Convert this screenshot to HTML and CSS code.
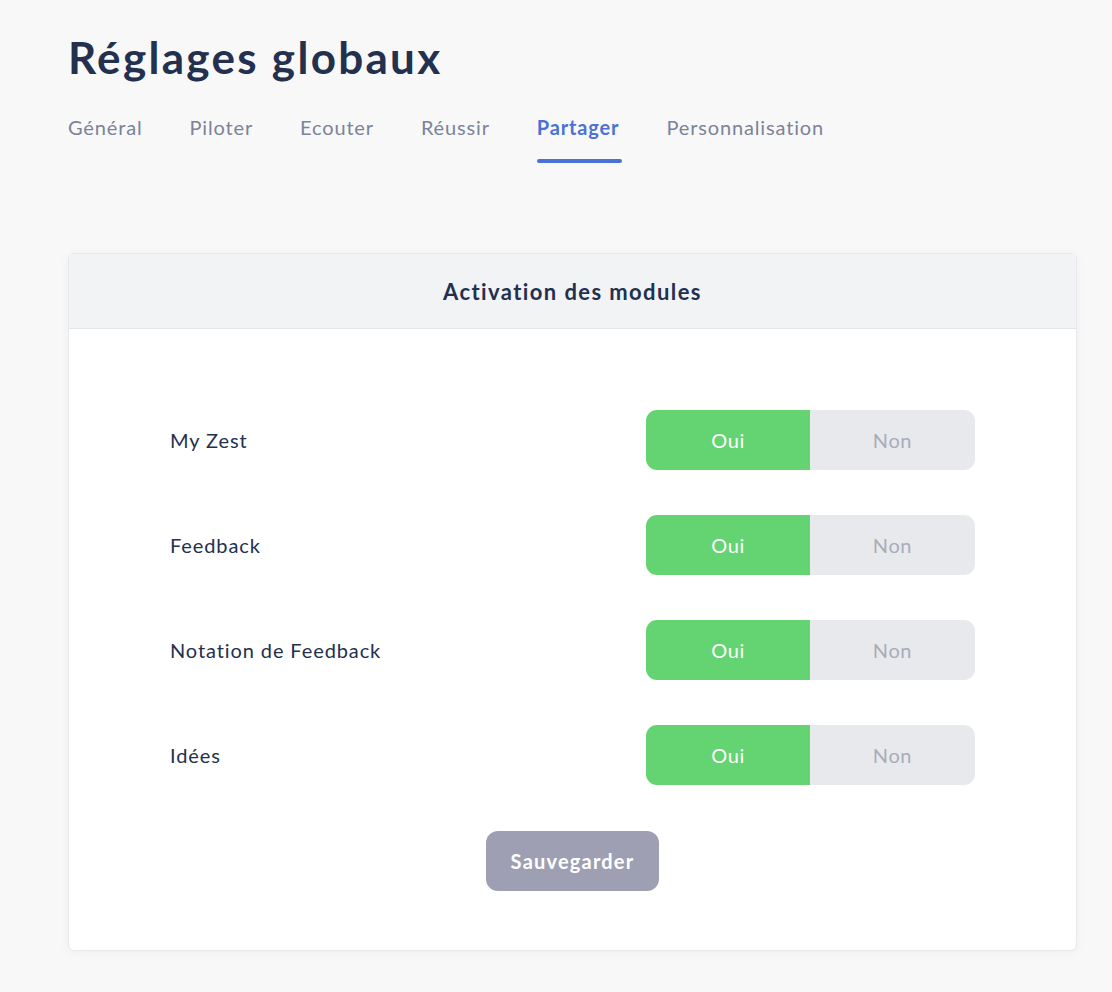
FILE: index.html
```html
<!DOCTYPE html>
<html lang="fr">
<head>
<meta charset="utf-8">
<link rel="stylesheet" href="styles.css">
</head>
<body>
<main class="page">
  <h1 class="title">Réglages globaux</h1>
  <nav class="tabs">
    <span class="tab">Général</span>
    <span class="tab">Piloter</span>
    <span class="tab">Ecouter</span>
    <span class="tab">Réussir</span>
    <span class="tab tab-active">Partager</span>
    <span class="tab">Personnalisation</span>
  </nav>
  <section class="card">
    <header class="card-head">Activation des modules</header>
    <div class="card-body">
      <div class="row">
        <span class="label">My Zest</span>
        <div class="toggle"><span class="opt opt-on">Oui</span><span class="opt opt-off">Non</span></div>
      </div>
      <div class="row">
        <span class="label">Feedback</span>
        <div class="toggle"><span class="opt opt-on">Oui</span><span class="opt opt-off">Non</span></div>
      </div>
      <div class="row">
        <span class="label">Notation de Feedback</span>
        <div class="toggle"><span class="opt opt-on">Oui</span><span class="opt opt-off">Non</span></div>
      </div>
      <div class="row">
        <span class="label">Idées</span>
        <div class="toggle"><span class="opt opt-on">Oui</span><span class="opt opt-off">Non</span></div>
      </div>
      <div class="actions"><button class="save">Sauvegarder</button></div>
    </div>
  </section>
</main>
</body>
</html>
```
FILE: styles.css
```css
* { box-sizing: border-box; }
html, body { margin: 0; padding: 0; }
body {
  background: #f8f8f8;
  font-family: "Lato", "Open Sans", sans-serif;
  color: #23304e;
}
.page {
  padding: 29px 35px 40px 68px;
}
.title {
  margin: 0;
  font-size: 44px;
  font-weight: 700;
  line-height: 56px;
  letter-spacing: 2.3px;
  color: #23304e;
}
.tabs {
  display: flex;
  margin-top: 30px;
  height: 48px;
}
.tab {
  font-size: 20px;
  letter-spacing: 0.85px;
  color: #7b8399;
  margin-right: 47px;
  line-height: 24px;
  position: relative;
}
.tab-active {
  color: #4a72d6;
  font-weight: 700;
}
.tab-active::after {
  content: "";
  position: absolute;
  left: 0;
  right: -3px;
  top: 44px;
  height: 4px;
  border-radius: 2px;
  background: #4a72d6;
}
.card {
  margin-top: 90px;
  width: 1009px;
  background: #fff;
  border: 1px solid #e6e8ec;
  border-radius: 6px;
  box-shadow: 0 2px 12px rgba(0,0,0,0.04);
  overflow: hidden;
}
.card-head {
  height: 75px;
  background: #f2f3f5;
  border-bottom: 1px solid #e3e5ea;
  display: flex;
  align-items: center;
  justify-content: center;
  font-size: 22px;
  font-weight: 700;
  letter-spacing: 1.4px;
  color: #23304e;
}
.card-body {
  padding: 81px 101px 59px 101px;
  display: flex;
  flex-direction: column;
  gap: 45px;
}
.row {
  display: flex;
  align-items: center;
  justify-content: space-between;
  height: 60px;
}
.label {
  font-size: 20px;
  letter-spacing: 0.9px;
  color: #23304e;
}
.toggle {
  display: flex;
  width: 329px;
  height: 60px;
  border-radius: 11px;
  overflow: hidden;
}
.opt {
  flex: 1;
  display: flex;
  align-items: center;
  justify-content: center;
  font-size: 20px;
  letter-spacing: 0.6px;
}
.opt-on { background: #63d471; color: #fff; flex: 0 0 164px; }
.opt-off { background: #e8e9ed; color: #a9acb8; }
.actions {
  display: flex;
  justify-content: center;
  margin-top: 1px;
}
.save {
  width: 173px;
  height: 60px;
  border: none;
  border-radius: 12px;
  background: #9e9fb3;
  color: #fff;
  font-family: inherit;
  font-size: 20px;
  font-weight: 700;
  letter-spacing: 1.2px;
}
```
